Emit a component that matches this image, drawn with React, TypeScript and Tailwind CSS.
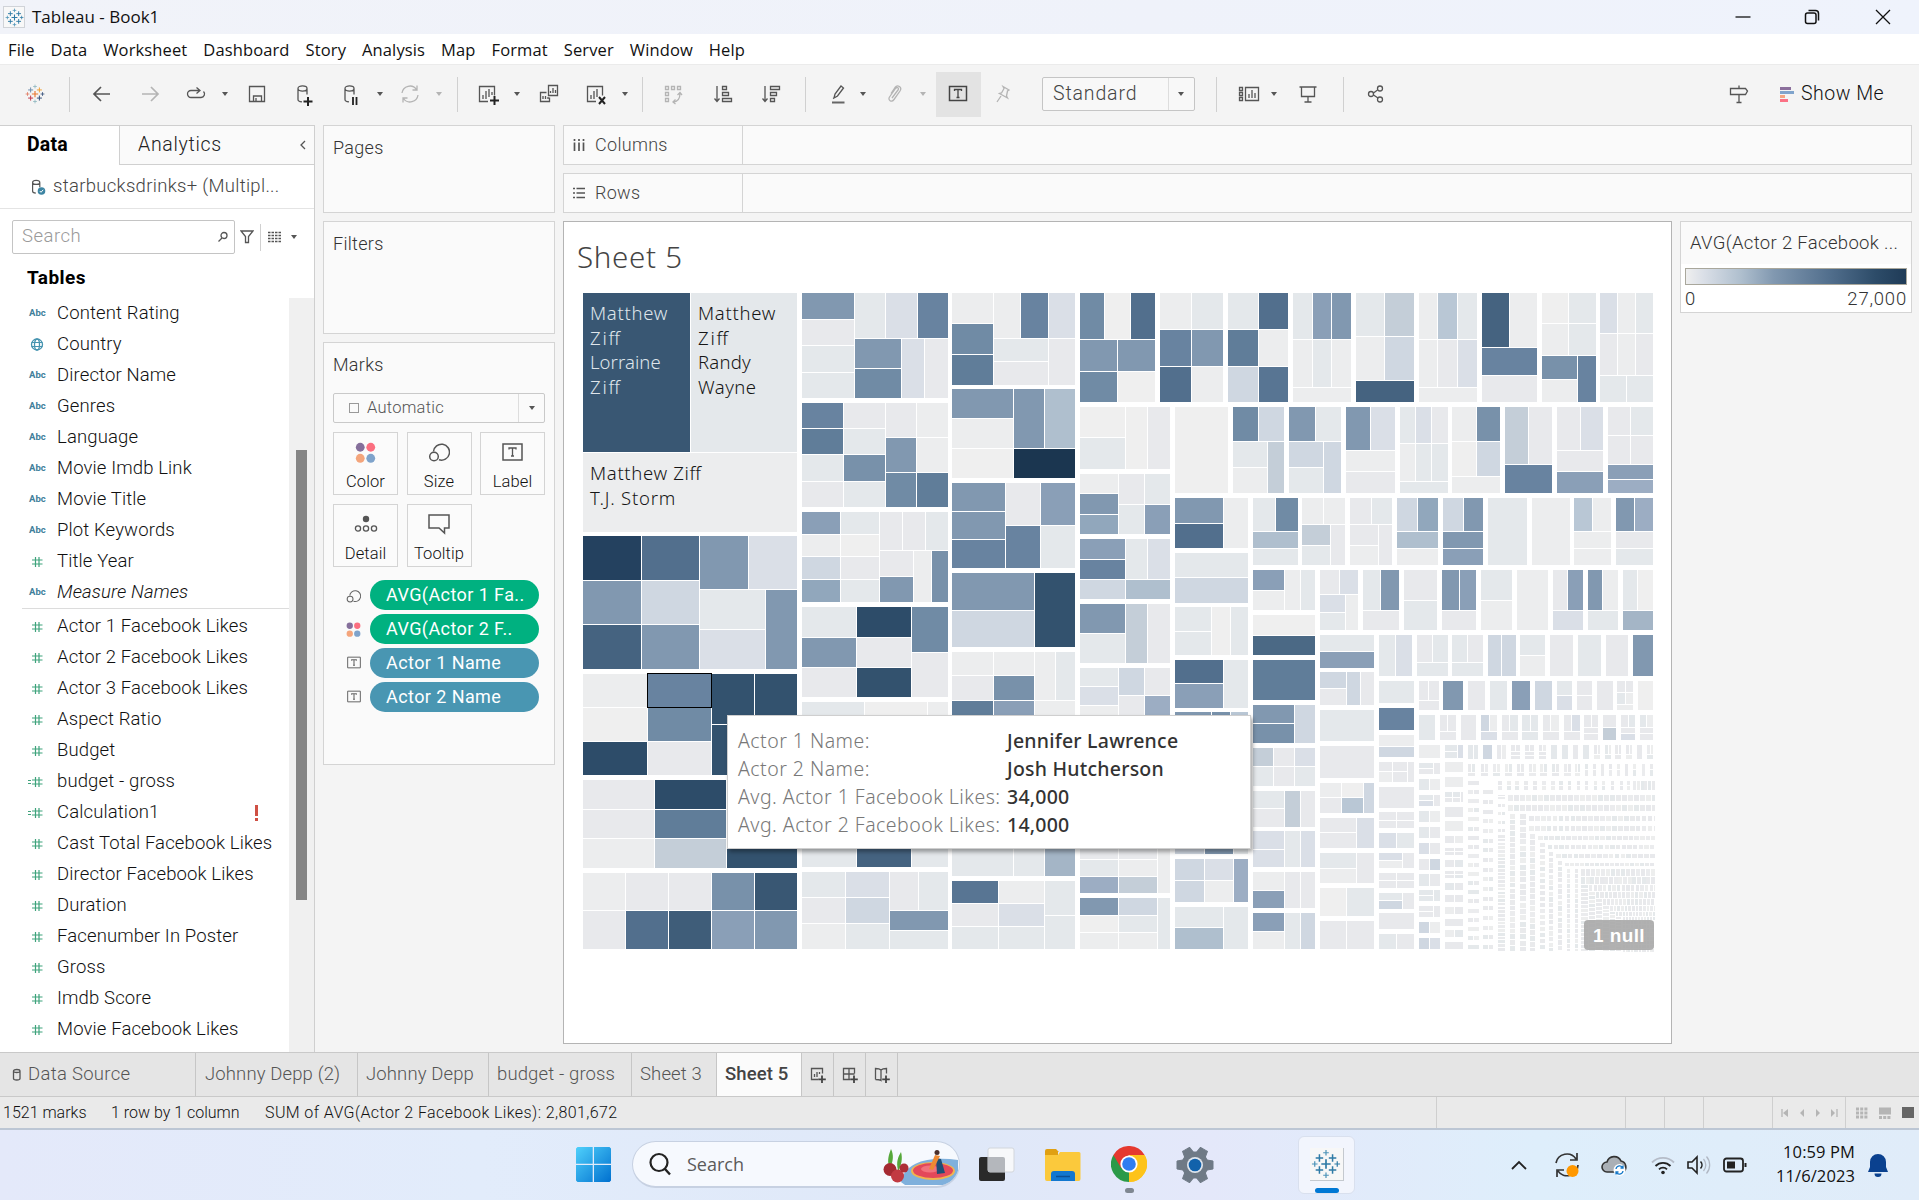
import React from "react";

const PALETTE: Record<string, string> = {
  a: "#efefef", b: "#ecedee", c: "#e8e9ec", d: "#e4e8eb", e: "#dadfe7", f: "#cfd7e1", g: "#c4ced8",
  h: "#b9c7d5", i: "#afbfce", j: "#a4b5c6", k: "#9cadc3", L: "#91a7bc", l: "#8a9fb7", m: "#8198b0",
  n: "#7891aa", o: "#708ba5", p: "#6883a0", q: "#607d99", r: "#587593", s: "#526f8d", t: "#4b6985",
  u: "#456380", v: "#3f5d79", w: "#395773", x: "#33526e", y: "#2d4c69", z: "#24415f", Z: "#1b3650",
};

type Cell = { x: number; y: number; w: number; h: number; c: string };

/* Each line is a strip of cells: "r y0 y1 x0 colour x1 colour x2 ..." for a row,
   "c x0 x1 y0 colour y1 ..." for a column. Units are thirds of a pixel. */
function parseStrips(spec: string, ox: number, oy: number): Cell[] {
  const out: Cell[] = [];
  for (const line of spec.trim().split("\n")) {
    const t = line.trim().split(/\s+/);
    const a = +t[1];
    const b = +t[2];
    for (let k = 3; k + 2 < t.length; k += 2) {
      const s = +t[k];
      const e = +t[k + 2];
      const c = PALETTE[t[k + 1]];
      if (t[0] === "r") out.push({ x: ox + s, y: oy + a, w: e - s - 3, h: b - a - 3, c });
      else out.push({ x: ox + a, y: oy + s, w: b - a - 3, h: e - s - 3, c });
    }
  }
  return out;
}

const TOP_LEFT = `
r 24 504 24 w 348 d 669
r 504 744 24 b 669
c 24 201 753 z 888 m 1020 u 1155
c 201 375 753 s 888 f 1020 m 1155
r 753 915 375 m 522 e 669
c 375 573 915 d 1035 e 1155
c 573 669 915 m 1155
c 681 840 24 m 105 c 183 d 264 d 342
r 24 162 840 d 933 e 1029 p 1122
c 840 981 162 m 252 o 342
c 981 1050 162 e 342
c 1050 1122 162 c 342
c 681 807 354 p 432 q 510 d 591 c 669
c 807 933 354 c 432 d 510 n 591 d 669
c 933 1026 354 c 459 m 564 o 669
c 1026 1122 354 b 459 b 564 q 669
c 681 798 681 l 750 b 816 f 885 L 954
c 798 915 681 d 750 a 816 c 885 d 954
r 681 798 915 c 984 c 1053 d 1122
c 915 1017 798 c 876 m 954
c 1017 1071 798 b 954
c 1071 1122 798 n 954
c 681 846 966 d 1059 m 1149 c 1239
c 846 1011 966 y 1059 c 1149 x 1239
c 1011 1122 966 o 1104 c 1239`;

const TOP_MID = `
c 21 147 24 b 117 o 210 q 303
r 24 162 147 b 228 p 312 e 393
c 147 312 162 d 231 c 303
c 312 393 162 c 303
c 21 207 312 m 402 b 492 a 582
r 312 492 207 m 300 i 393
r 492 582 207 Z 393
c 21 183 594 m 681 m 765 p 852
c 183 288 594 c 723 p 852
c 288 393 594 l 723 d 852
c 21 270 864 m 978 f 1089
c 270 393 864 x 1089
r 24 165 405 o 480 a 558 s 633
c 405 519 165 m 261 o 354
c 519 633 165 m 261 a 354
c 405 543 366 a 459 d 555
r 366 555 543 a 609 c 678
c 405 522 567 b 627 m 690 L 750
c 522 600 567 c 660 d 750
c 600 678 567 d 660 l 750
c 405 543 762 l 825 p 885 f 945
r 762 885 543 d 609 e 678
r 885 945 543 i 678
c 405 543 957 m 1047 d 1137
r 957 1137 543 g 609 c 678
c 645 741 24 b 135 p 246 s 354
c 741 837 24 d 135 m 246 b 354
c 849 942 24 d 135 q 246 f 354
c 942 1032 24 s 135 b 246 r 354
r 366 627 690 a 852
r 366 471 864 o 942 f 1020
c 864 969 471 d 549 b 627
c 969 1020 471 g 627
c 690 837 639 m 717 s 792
c 837 912 639 b 792
c 690 912 804 d 879 f 957
c 690 801 966 d 1041 d 1113
r 966 1113 801 a 858 d 912
r 639 741 924 d 993 o 1062
c 924 1062 741 i 792 d 843
c 924 1020 855 l 918 b 978
r 855 978 1020 b 1068 d 1113
c 924 1113 990 a 1053 t 1113`;

const TOP_RIGHT = `
r 24 165 -6 d 54 l 111 m 171
r 165 309 -6 b 54 d 111 b 171
r 309 354 -6 b 171
r 24 156 183 d 270 g 360
r 156 288 183 b 270 f 360
r 288 354 183 u 360
r 24 165 372 b 429 h 489 d 549
r 165 309 372 b 429 c 489 e 549
r 309 354 372 b 549
r 24 189 561 u 645 b 729
c 561 729 189 p 273 c 354
r 24 117 741 a 822 d 906
r 117 213 741 b 822 d 906
c 741 849 213 n 285 b 354
c 849 906 213 p 354
r 24 147 915 e 969 b 1023 d 1077
r 147 273 915 c 969 b 1023 c 1077
r 273 354 915 d 996 d 1077
r 366 471 -18 m 63 d 141
c -18 87 471 f 549 d 627
c 87 141 471 f 627
r 366 498 153 m 228 e 303
c 153 303 498 b 561 c 627
r 366 477 315 d 363 e 411 c 462
r 477 591 315 b 363 d 411 d 462
r 591 627 315 d 462
r 366 471 471 b 546 n 618
r 471 576 471 a 546 f 618
r 576 627 471 b 618
r 366 540 630 g 702 c 774
r 540 627 630 p 774
r 366 498 786 c 858 e 927
c 786 927 498 c 561 l 627
r 366 453 939 c 1008 d 1077
r 453 540 939 c 1008 c 1077
c 939 1077 540 l 585 k 627
r 639 720 21 b 87 b 153
c 21 108 720 g 783 d 843
c 108 153 720 c 843
r 639 720 165 c 231 d 294
c 165 252 720 c 783 b 843
c 252 294 720 c 843
r 639 741 306 f 369 L 432
c 306 432 741 i 792 b 843
r 639 741 444 f 507 m 567
c 444 567 741 m 792 l 843
r 639 843 579 d 699
r 639 843 711 b 828
r 639 741 837 h 894 b 951
c 837 951 741 b 792 b 843
r 639 741 963 m 1020 k 1077
c 963 1077 741 c 792 d 843
r 855 930 75 c 135 e 192
c 75 153 930 e 984 d 1038
c 153 192 930 b 1038
r 855 978 204 d 258 m 315
r 978 1038 204 c 315
c 327 429 855 c 948 d 1038
r 855 978 441 m 495 l 546
r 978 1038 441 c 546
c 558 654 855 d 948 b 1038
r 855 1038 666 b 762
r 855 978 774 c 819 l 867
r 978 1038 774 e 867
r 855 978 879 m 924 b 972
r 978 1038 879 d 972
r 855 978 984 d 1029 a 1077
r 978 1038 984 j 1077`;

const BOTTOM_LEFT = `
c 24 219 177 b 279 a 381 y 483
c 219 411 177 p 279 o 381 c 483
r 177 330 411 x 540 x 669
r 330 483 411 x 669
c 24 240 495 c 585 c 672 b 762
c 240 456 495 y 585 q 672 g 762
r 672 762 456 x 669
r 774 888 24 b 153 c 282 c 411 n 540 w 669
r 888 1005 24 c 153 s 282 v 411 l 540 m 669
r 261 340 681 d 870 a 1059 b 1122
r 672 759 681 d 846 u 1011 d 1122
c 681 813 771 d 849 c 927 b 1005
c 813 945 771 e 849 f 927 d 1005
r 771 888 945 c 1032 d 1122
c 945 1122 888 m 948 d 1005`;

const BOTTOM_MID = `
c 21 147 111 b 183 c 258 q 340
c 147 270 111 b 183 n 258 l 340
r 111 258 270 b 333 d 393
r 258 340 270 b 393
r 660 786 21 d 207 d 300 j 393
c 21 162 798 r 867 c 936 d 1005
c 162 300 798 b 867 e 936 d 1005
c 300 393 798 d 903 d 1005
c 405 522 159 d 216 e 273 b 340
c 522 600 159 f 243 c 340
c 600 678 159 c 243 k 340
c 405 522 660 c 735 d 786 k 837
c 522 639 660 c 735 b 786 g 837
c 639 678 660 b 837
c 405 522 849 m 903 a 954 b 1005
c 522 639 849 f 903 d 954 b 1005
c 639 678 849 d 1005
c 690 837 135 s 207 l 282
c 837 912 135 d 282
r 291 340 690 m 801 n 858 h 912
r 660 720 690 f 780 m 867 d 912
c 690 780 732 f 798 f 864
c 780 867 732 e 798 b 864
c 867 912 732 k 864
c 690 837 876 d 939 i 1005
c 837 912 876 d 1005
r 135 258 924 q 1113
c 924 1050 270 m 327 n 387
c 1050 1113 270 f 387
c 924 987 399 g 456 d 516
c 987 1050 399 c 456 c 516
c 1050 1113 399 e 456 d 516
c 924 1020 528 d 582 c 639
r 528 639 1020 g 1068 c 1113
c 924 1020 648 e 705 e 759
r 648 759 1020 d 1068 e 1113
c 924 1020 771 b 828 l 882
r 771 882 1020 c 1068 c 1113
c 924 1020 894 l 951 b 1005
r 894 1005 1020 d 1068 f 1113`;

const BOTTOM_RIGHT = `
c 75 240 60 d 111 l 162
c 75 156 171 f 222 c 273
r 171 273 156 f 198 c 240
r 285 381 75 d 240
r 393 492 75 c 240
c 75 141 504 b 549 c 597
c 141 207 504 a 549 h 597
c 207 240 504 f 597
c 75 186 609 c 654 c 702
c 186 240 609 e 702
c 75 186 714 d 762 b 807
c 186 240 714 c 807
r 819 906 75 a 156 d 240
r 918 1005 75 c 156 c 240
r 60 186 252 d 303 e 354
r 60 144 366 c 414 d 462
r 144 186 366 d 462
r 60 144 471 d 519 c 567
r 144 186 471 d 567
r 60 186 579 f 621 f 666
c 675 753 60 d 123 b 186
r 60 186 765 c 837
r 60 186 849 d 921
r 60 186 933 c 1002
r 60 186 1014 m 1077
r 198 267 252 d 360
r 279 348 252 p 360
c 252 360 360 b 396 f 429
r 441 471 252 c 294 c 339
r 471 504 252 b 294 c 339
r 441 504 339 c 360
r 516 582 252 c 360
r 591 618 252 c 306 c 360
r 618 642 252 c 306 c 360
r 654 702 252 e 306 d 360
c 252 324 714 e 738 b 762
r 714 762 324 c 360
r 774 798 252 c 306 c 360
r 798 822 252 c 306 c 360
c 252 324 834 d 858 f 885
r 834 885 324 c 360
r 894 945 252 c 360
r 957 1005 252 d 306 c 360
r 198 258 372 c 402 c 435
r 258 288 372 c 435
r 198 288 444 m 507
r 198 288 519 c 573
r 198 288 585 d 639
r 198 288 651 l 708
r 198 288 720 f 774
c 786 834 198 d 243 e 288
c 846 894 198 c 243 c 288
r 198 288 906 c 957
r 198 234 966 c 993 c 1017
r 234 270 966 d 993 b 1017
r 270 288 966 b 1017
r 198 288 1029 a 1077
r 300 378 372 d 423
r 300 351 435 c 459 c 486
r 351 378 435 c 486
r 300 378 498 c 546
r 300 351 558 f 585 b 609
r 351 378 558 e 609
r 300 351 621 c 645 d 672
r 351 378 621 c 672
r 300 351 681 d 708 d 732
r 351 378 681 d 732
r 300 351 744 c 768 b 795
r 351 378 744 c 795
r 300 351 807 c 831 e 858
r 351 378 807 c 858
r 300 339 867 c 891 c 912
c 867 912 339 c 357 c 378
c 924 966 300 c 339 g 378
r 300 339 978 c 1002 d 1023
c 978 1023 339 c 357 e 378
r 300 339 1035 d 1056 b 1077
c 1035 1077 339 c 357 c 378
r 390 432 372 b 438
c 372 417 444 d 461 c 480
r 444 480 417 c 438
r 492 528 372 d 405 b 438
c 372 417 540 d 558 e 576
r 540 576 417 c 438
r 588 624 372 d 405 b 438
r 636 672 372 d 405 c 438
r 684 720 372 e 405 c 438
r 732 768 372 c 405 f 438
r 777 816 372 d 405 c 438
c 372 417 825 d 843 d 861
r 825 861 417 d 438
c 372 417 873 c 891 c 909
r 873 909 417 c 438
r 921 957 372 f 405 b 438
r 969 1005 372 f 405 e 438
c 450 489 390 d 411 d 432
r 390 432 489 e 507
r 441 474 450 b 507
r 486 519 450 b 507
c 450 474 531 d 549 c 564
c 474 498 531 d 549 c 564
c 498 507 531 c 564
r 576 609 450 c 507
r 618 651 450 b 507
r 663 687 450 c 480 b 507
r 699 711 450 c 480 c 507
r 711 723 450 c 480 c 507
r 735 759 450 c 480 d 507
r 768 780 450 c 480 c 507
r 780 792 450 c 480 d 507
r 804 828 450 d 480 c 507
r 840 864 450 c 480 c 507
r 876 900 450 b 480 c 507
r 912 936 450 c 507
r 945 969 450 b 480 d 507
r 981 1005 450 c 507
r 390 435 519 d 537 d 552
r 390 435 564 f 594
r 390 435 606 c 621 b 636
r 390 411 648 c 663 c 678
c 648 678 411 c 423 c 435
r 390 411 690 c 705 c 720
c 690 720 411 c 423 c 435
r 390 411 732 c 744 b 756
c 732 756 411 c 423 c 435
r 390 435 768 d 789
r 390 435 801 d 822
r 390 435 834 c 852
r 390 435 864 d 885
r 390 435 1026 c 1044`;

function buildTail(): Cell[] {
  const out: Cell[] = [];
  const tone = ["#e8e9ec", "#e5e9eb", "#ebecee", "#e9eaec", "#edeeee"];
  let n = 0;
  const add = (x: number, y: number, w: number, h: number) => {
    out.push({ x: 2160 + x, y: 990 + y, w, h, c: tone[(n * 7 + (n >> 2)) % 5] });
    n++;
  };
  const row = (x: number, y: number, w: number, h: number, pitch: number) => {
    for (let p = x; p < 1080; p += pitch) add(p, y, Math.min(w, 1080 - p), h);
  };
  const col = (x: number, y: number, w: number, h: number, pitch: number, end = 1008) => {
    for (let p = y; p < end; p += pitch) add(x, p, w, Math.min(h, end - p));
  };
  const trio = (x: number, y: number, w: number, top: number, total: number) => {
    const half = (w - 3) / 2;
    add(x, y, half, top);
    add(x + half + 3, y, half, top);
    add(x, y + top + 3, w, total - top - 3);
  };
  [897, 930, 960, 993, 1056].forEach((x) => trio(x, 390, 18, 27, 42));
  [519, 558, 594, 630, 666, 702, 735, 771, 807].forEach((x) => trio(x, 447, 21, 24, 36));
  trio(840, 447, 15, 24, 36);
  [870, 894, 942, 966, 1014, 1065].forEach((x) => {
    add(x, 447, 9, 15);
    add(x, 465, 9, 18);
  });
  [918, 990, 1041].forEach((x) => add(x, 447, 9, 36));
  [609, 636, 660, 687, 714, 741, 768, 792, 819, 846, 870, 897, 921, 948, 975, 996].forEach((x, i) => {
    const w = i < 8 ? 12 : 9;
    add(x, 498, w, 12);
    add(x, 513, w, 12);
  });
  [1014, 1026, 1038, 1047, 1059, 1071].forEach((x) => add(x, 498, 8, 27));
  for (let i = 0; i < 19; i++) {
    const y = 498 + i * 27.33;
    if (i % 2 === 0) add(519, y, 33, 12);
    else {
      add(519, y, 15, 12);
      add(537, y, 15, 12);
    }
  }
  for (let i = 0; i < 17; i++) {
    const y = 526 + i * 29;
    if (i === 0 || i === 2) add(564, y, 30, 12);
    else {
      add(564, y, 15, 12);
      add(582, y, 12, 12);
    }
  }
  add(609, 540, 21, 3);
  add(609, 546, 21, 6);
  [567, 591, 618, 642].forEach((y) => {
    add(609, y, 9, 10);
    add(621, y, 9, 10);
  });
  col(609, 660, 21, 8, 11.3);
  row(639, 540, 15, 18, 18);
  row(639, 570, 15, 18, 18);
  row(702, 603, 14, 15, 17.8);
  row(702, 633, 14, 15, 17.8);
  row(729, 663, 14, 12, 17);
  row(759, 690, 13, 12, 17);
  row(783, 717, 14, 12, 17.6);
  row(810, 744, 12, 9, 15);
  row(858, 762, 12, 21, 15);
  row(858, 786, 12, 21, 14);
  row(882, 810, 10, 18, 14);
  row(903, 831, 10, 18, 13);
  row(924, 852, 9, 18, 12);
  row(945, 873, 8, 15, 11);
  row(963, 891, 7, 12, 10);
  row(984, 906, 6, 10, 9);
  for (let y = 918; y < 1005; y += 12) row(984, y, 6, 9, 8);
  col(645, 597, 15, 14, 17.2);
  col(675, 597, 18, 15, 19);
  col(705, 657, 15, 14, 18);
  col(735, 684, 15, 13, 18);
  col(762, 711, 12, 13, 17);
  col(789, 738, 12, 13, 17);
  col(816, 762, 9, 12, 15);
  col(840, 762, 9, 12, 15);
  col(858, 810, 21, 9, 12);
  col(882, 831, 18, 9, 12);
  col(903, 852, 18, 9, 12);
  col(924, 873, 18, 8, 11);
  col(945, 891, 15, 7, 10);
  col(963, 906, 15, 7, 9);
  return out;
}

const CELLS: Cell[] = [
  ...parseStrips(TOP_LEFT, 0, 0),
  ...parseStrips(TOP_MID, 1110, 0),
  ...parseStrips(TOP_RIGHT, 2160, 0),
  ...parseStrips(BOTTOM_LEFT, 0, 990),
  ...parseStrips(BOTTOM_MID, 1110, 990),
  ...parseStrips(BOTTOM_RIGHT, 2160, 990),
  ...buildTail(),
];

function Treemap() {
  return (
    <svg width="1088" height="680" viewBox="0 0 3264 2040" className="block" fontFamily='"Noto Sans","Open Sans",sans-serif' fontWeight="300" fontSize="55.5">
      <g shapeRendering="crispEdges">
        {CELLS.map((c, i) => (
          <rect key={i} x={c.x} y={c.y} width={c.w} height={c.h} fill={c.c} />
        ))}
        <rect x="217.5" y="1165.5" width="192" height="102" fill="none" stroke="#000" strokeWidth="3" />
      </g>
      <g fill="#dfe5eb">
        <text x="45" y="104" textLength="232">Matthew</text>
        <text x="45" y="179" textLength="90">Ziff</text>
        <text x="45" y="253" textLength="212">Lorraine</text>
        <text x="45" y="327" textLength="90">Ziff</text>
      </g>
      <g fill="#161616">
        <text x="369" y="104" textLength="232">Matthew</text>
        <text x="369" y="179" textLength="90">Ziff</text>
        <text x="369" y="253" textLength="158">Randy</text>
        <text x="369" y="327" textLength="174">Wayne</text>
        <text x="45" y="585" textLength="333">Matthew Ziff</text>
        <text x="45" y="660" textLength="256">T.J. Storm</text>
      </g>
    </svg>
  );
}

type IconProps = { children: React.ReactNode; w?: number; h?: number; color?: string; className?: string };
function Svg({ children, w = 24, h = 24, color = "#555", className = "" }: IconProps) {
  return (
    <svg width={w} height={h} viewBox={`0 0 ${w} ${h}`} fill="none" stroke={color} strokeWidth="1.3" className={`block shrink-0 ${className}`}>
      {children}
    </svg>
  );
}

function Caret({ className = "", color = "#555" }: { className?: string; color?: string }) {
  return (
    <Svg w={10} h={6} className={className}>
      <path d="M2 1h6L5 5z" fill={color} stroke="none" />
    </Svg>
  );
}

function Sep({ className }: { className: string }) {
  return <div className={`h-[35px] w-px shrink-0 bg-[#d0d0d0] ${className}`} />;
}

function TableauMark({ size, colors }: { size: number; colors: string[] }) {
  const plus = (x: number, y: number, r: number, c: string, sw: number) => (
    <path d={`M${x - r} ${y}h${2 * r}M${x} ${y - r}v${2 * r}`} stroke={c} strokeWidth={sw} />
  );
  return (
    <svg width={size} height={size} viewBox="0 0 32 32" className="block shrink-0">
      {plus(16, 16, 5, colors[0], 1.8)}
      {plus(9, 9.5, 4, colors[1], 1.6)}
      {plus(23, 9.5, 4, colors[2], 1.6)}
      {plus(9, 22.5, 4, colors[3], 1.6)}
      {plus(23, 22.5, 4, colors[4], 1.6)}
      {plus(16, 4, 3, colors[5], 1.3)}
      {plus(16, 28, 3, colors[5], 1.3)}
      {plus(4, 16, 3, colors[6], 1.3)}
      {plus(28, 16, 3, colors[4], 1.3)}
    </svg>
  );
}
const BLUES = ["#2f7ba6", "#2f7ba6", "#2f7ba6", "#2f7ba6", "#2f7ba6", "#4d93b8", "#4d93b8"];

const CYL = "M2 5.5c0-3.4 9-3.4 9 0s-9 3.4-9 0v11c0 1.4 2 2.2 4 2.4M11 5.5v6";

function Toolbar() {
  const dim = "#b4b4b4";
  return (
    <div className="flex h-[61px] items-center border-t border-[#ebebeb] bg-[#f4f4f4] pb-[2px]">
      <div className="mr-px ml-[25px]"><TableauMark size={20} colors={["#e8762d", "#6f8fb0", "#f0a33b", "#c23b4b", "#35507a", "#8fb7c0", "#e07a60"]} /></div>
      <Sep className="ml-[23px]" />
      <Svg className="ml-[20px]"><path d="M4 12h16M11 5l-7 7 7 7" strokeWidth="1.7" /></Svg>
      <Svg className="ml-[24px]" color={dim}><path d="M4 12h16M13 5l7 7-7 7" strokeWidth="1.7" /></Svg>
      <Svg className="ml-[22px]"><path d="M15.500 8.500H7a3.500 3.500 0 0 0 0 7h10a3.500 3.500 0 0 0 2.500-6M12.500 5.500l3.500 3-3.500 3" /></Svg>
      <Caret className="ml-[12px]" />
      <Svg className="ml-[15px]"><path d="M4.500 4.500h15v15h-15zM8.500 19v-5h8v5M11 16v3" /></Svg>
      <Svg className="ml-[23px]"><g transform="translate(4 1)"><path d={CYL} /><path d="M12 14v9M7.500 18.500h9" stroke="#222" strokeWidth="2" /></g></Svg>
      <Svg className="ml-[23px]"><g transform="translate(4 1)"><path d={CYL} /><path d="M10 14v8M13.500 14v8" stroke="#222" strokeWidth="1.8" /></g></Svg>
      <Caret className="ml-[12px]" />
      <Svg className="ml-[13px]" color={dim}><path d="M4 11a8 8 0 0 1 14.500-3.500M20 13a8 8 0 0 1-14.500 3.500M19 3.500v4.500h-4.500M5 20.500V16h4.500" /></Svg>
      <Caret className="ml-[12px]" color={dim} />
      <Sep className="ml-[13px]" />
      <Svg className="ml-[17px]"><path d="M13 19.500H4.500v-15h15v9M8 17v-4M11 17V9M14 15V7M17 13v-3" /><path d="M19.500 14v9M15 18.500h9" stroke="#222" strokeWidth="2" /></Svg>
      <Caret className="ml-[13px]" />
      <Svg className="ml-[15px]"><path d="M11.500 3.500h9v10h-9zM13.500 11V9M16 11V6M18.500 11V8M9.500 10.500h-6v9h9v-4M6 17v-3M8.500 17v-3M11 17v-2" /></Svg>
      <Svg className="ml-[22px]"><path d="M13 19.500H4.500v-15h15v9M8 17v-4M11 17V9M14 15V7" /><path d="M16 15l6 7M22 15l-6 7" stroke="#222" strokeWidth="2" /></Svg>
      <Caret className="ml-[13px]" />
      <Sep className="ml-[12px]" />
      <Svg className="ml-[18px]" color={dim}><path d="M4.500 4.500h3v3h-3zM10.500 4.500h3v3h-3zM16.500 4.500h3v3h-3zM4.500 10.500h3v3h-3zM4.500 16.500h3v3h-3zM12 20c5 0 7-3 7-9M16.500 13l2.500-2.500 2 2.500M14.500 17.500L12 20l2.500 2" /></Svg>
      <Svg className="ml-[26px]"><path d="M6 4v15M3.500 16.500L6 19.500l2.500-3" /><path d="M11.500 4.500h4v3h-4zM11.500 10.500h6v3h-6zM11.500 16.500h9v3h-9z" /></Svg>
      <Svg className="ml-[24px]"><path d="M6 4v15M3.500 16.500L6 19.500l2.500-3" /><path d="M11.500 4.500h9v3h-9zM11.500 10.500h6v3h-6zM11.500 16.500h4v3h-4z" /></Svg>
      <Sep className="ml-[22px]" />
      <Svg className="ml-[20px]"><path d="M8 16l1-4 6-8 2.500 2-6 8z M7 16.500l2-1" /><path d="M6 20.500h12.500" stroke="#666" strokeWidth="2" /></Svg>
      <Caret className="ml-[8px]" />
      <Svg className="ml-[15px]" color={dim}><path d="M9 16l6-8c1.500-2-1-3.500-2.500-1.500l-6 8.500c-2 3 2 6 4.500 2.500l6-8.500c2.500-4-2.500-7-5-3.500l-4 6" /></Svg>
      <Caret className="ml-[11px]" color={dim} />
      <div className="ml-[8px] flex h-[45px] w-[45px] shrink-0 items-center justify-center bg-[#e3e3e3] pr-[2px]">
        <Svg color="#444"><path d="M3.500 4.500h17v14h-17z" strokeWidth="1.500" /><path d="M8.500 9V7.500h7V9M12 7.500v8M10.500 15.500h3" /></Svg>
      </div>
      <Svg className="ml-[9px]" color={dim}><path d="M13 4.500l6 3.500-1.500 1-1 5 1 2-8-4.500 2-.5 2.500-4.500zM11 14l-4 6" /></Svg>
      <div className="ml-[28px] flex h-[34px] w-[153px] shrink-0 items-center rounded-[2px] border border-[#c5c5c5] bg-[#f8f8f8]">
        <div className="w-[126px] border-r border-[#ddd] pl-[10px] text-[19.500px] leading-[32px] tracking-[0.850px] text-[#444]">Standard</div>
        <Caret className="ml-[7px]" />
      </div>
      <Sep className="ml-[21px]" />
      <Svg className="ml-[20px]"><path d="M2.500 5.500h3v3h-3zM2.500 10.500h3v3h-3zM2.500 15.500h3v3h-3zM8.500 5.500h13v13h-13zM12 16v-4M15 16V8M18 16v-5" /></Svg>
      <Caret className="ml-[8px]" />
      <Svg className="ml-[17px]"><path d="M3.500 5h17M5.500 5v9.500h13V5M12 14.500v5.500M8.500 20h7" /></Svg>
      <Sep className="ml-[23px]" />
      <Svg className="ml-[20px]"><circle cx="7" cy="12" r="2.500" /><circle cx="16" cy="6.500" r="2.500" /><circle cx="16" cy="17.500" r="2.500" /><path d="M9.500 11l4-3M9.500 13l4.500 3" /></Svg>
      <Svg className="ml-[339px]"><path d="M3.500 6.500h15l2 2.500-2 3.500h-15zM12 3.500v3M12 12.500v8M9.500 20.500h5" /></Svg>
      <div className="ml-[29px] flex w-[14px] shrink-0 flex-col gap-px">
        <i className="h-[3px] w-[11px] bg-[#8b6f9c]" />
        <i className="h-[3px] w-[14px] bg-[#80a4cc]" />
        <i className="h-[3px] w-[5px] bg-[#f4a582]" />
        <i className="h-[3px] w-[8px] bg-[#fb7185]" />
      </div>
      <div className="ml-[7px] text-[19.500px] tracking-[0.5px] whitespace-nowrap text-[#111]">Show Me</div>
    </div>
  );
}

type Field = { name: string; kind: "abc" | "globe" | "num" | "calc"; italic?: boolean; warn?: boolean };
const DIMENSIONS: Field[] = [
  { name: "Content Rating", kind: "abc" },
  { name: "Country", kind: "globe" },
  { name: "Director Name", kind: "abc" },
  { name: "Genres", kind: "abc" },
  { name: "Language", kind: "abc" },
  { name: "Movie Imdb Link", kind: "abc" },
  { name: "Movie Title", kind: "abc" },
  { name: "Plot Keywords", kind: "abc" },
  { name: "Title Year", kind: "num" },
  { name: "Measure Names", kind: "abc", italic: true },
];
const MEASURES: Field[] = [
  { name: "Actor 1 Facebook Likes", kind: "num" },
  { name: "Actor 2 Facebook Likes", kind: "num" },
  { name: "Actor 3 Facebook Likes", kind: "num" },
  { name: "Aspect Ratio", kind: "num" },
  { name: "Budget", kind: "num" },
  { name: "budget - gross", kind: "calc" },
  { name: "Calculation1", kind: "calc", warn: true },
  { name: "Cast Total Facebook Likes", kind: "num" },
  { name: "Director Facebook Likes", kind: "num" },
  { name: "Duration", kind: "num" },
  { name: "Facenumber In Poster", kind: "num" },
  { name: "Gross", kind: "num" },
  { name: "Imdb Score", kind: "num" },
  { name: "Movie Facebook Likes", kind: "num" },
];

function FieldIcon({ kind }: { kind: Field["kind"] }) {
  if (kind === "abc") return <span className="block pl-px text-[9.500px] font-bold text-[#3f7f9b]">Abc</span>;
  if (kind === "globe")
    return (
      <Svg w={16} h={16} color="#4694b0" className="ml-px"><circle cx="8" cy="7.500" r="5.500" /><ellipse cx="8" cy="7.500" rx="2.500" ry="5.500" /><path d="M2.500 5.500h11M2.500 9.500h11" strokeWidth="1" /></Svg>
    );
  return (
    <Svg w={16} h={14} color="#3fa37c">
      <path d="M7.500 2v10M11 2v10M4 5h10.500M4 9h10.500" strokeWidth="1.200" />
      {kind === "calc" && <path d="M0 5.500h3M0 8.500h3" strokeWidth="1.200" />}
    </Svg>
  );
}

function FieldRow({ f }: { f: Field }) {
  return (
    <div className="flex h-[31px] items-center pl-[28px]">
      <div className="w-[29px] shrink-0"><FieldIcon kind={f.kind} /></div>
      <div className={`w-[190px] text-[18.500px] tracking-[0.130px] whitespace-nowrap text-[#111] ${f.italic ? "tracking-[0.4px] italic" : ""}`}>{f.name}</div>
      {f.warn && (
        <div className="ml-[8px] flex flex-col gap-[2px]">
          <i className="h-[11px] w-[3px] bg-[#cf5044]" />
          <i className="h-[3px] w-[3px] bg-[#cf5044]" />
        </div>
      )}
    </div>
  );
}

function DataPane() {
  return (
    <div className="flex h-full w-[315px] shrink-0 flex-col border-t border-r border-[#cfcfcf] bg-white">
      <div className="flex h-[39px] shrink-0 items-stretch">
        <div className="w-[119px] pl-[27px] text-[19.500px] leading-[38px] font-bold tracking-[0.2px] text-black">Data</div>
        <div className="flex flex-1 items-center justify-between border-b border-l border-[#d0d0d0] bg-[#fafafa] pr-[7px] pl-[18px] text-[19.500px] text-[#222]">
          <span className="tracking-[0.7px]">Analytics</span>
          <Svg w={8} h={12}><path d="M6 2L2 6l4 4" /></Svg>
        </div>
      </div>
      <div className="flex h-[44px] shrink-0 items-center border-b border-[#e4e4e4] pl-[30px]">
        <Svg w={17} h={20}><g transform="translate(1 1) scale(.8)"><path d={CYL} strokeWidth="1.500" /></g><circle cx="11.500" cy="14" r="3.800" fill="#3d85a3" stroke="none" /><path d="M9.800 14l1.200 1.300 2.200-2.500" stroke="#fff" strokeWidth="1" /></Svg>
        <span className="ml-[6px] text-[18.500px] tracking-[0.3px] whitespace-nowrap text-[#444]">starbucksdrinks+ (Multipl...</span>
      </div>
      <div className="flex h-[56px] shrink-0 items-center pl-[12px]">
        <div className="flex h-[34px] w-[223px] items-center justify-between rounded-[2px] border border-[#c4c4c4] px-[9px] text-[18.500px] text-[#9a9a9a]">
          <span className="tracking-[0.5px]">Search</span>
          <Svg w={12} h={12} className="-mr-[4px]"><circle cx="7" cy="4.500" r="3" /><path d="M5 7L1.500 10.500" /></Svg>
        </div>
        <Svg w={14} h={14} className="ml-[5px]"><path d="M1 1h12L8.500 6.500v6h-3v-6z" /></Svg>
        <div className="ml-[6px] h-[27px] w-px bg-[#d0d0d0]" />
        <Svg w={13} h={12} className="ml-[7px]"><path d="M0 1.500h13M0 4.500h13M0 7.500h13M0 10.500h13" strokeWidth="1.500" strokeDasharray="2.500 1" /></Svg>
        <Caret className="ml-[8px]" />
      </div>
      <div className="h-[33px] shrink-0 pl-[27px] text-[19px] leading-[26px] font-bold tracking-[0.450px] text-black">Tables</div>
      <div className="flex min-h-0 flex-1">
        <div className="w-[289px] shrink-0 overflow-hidden">
          {DIMENSIONS.map((f) => <FieldRow key={f.name} f={f} />)}
          <div className="mb-[2px] ml-[22px] h-px bg-[#dcdcdc]" />
          {MEASURES.map((f) => <FieldRow key={f.name} f={f} />)}
        </div>
        <div className="flex-1 bg-[#f0f0f0] pt-[152px] pl-[7px]">
          <div className="h-[450px] w-[11px] bg-[#858585]" />
        </div>
      </div>
    </div>
  );
}

const LABEL_T = (
  <>
    <path d="M1 1h19v16H1z" strokeWidth="1.500" />
    <path d="M7 6.500V5h7v1.500M10.500 5v8M9 13h3" />
  </>
);
const SIZE_SHAPE = (
  <>
    <path d="M5.500 9.500a8 8 0 1 1 5.500 8.300" strokeWidth="1.500" />
    <circle cx="6" cy="14.500" r="4.300" strokeWidth="1.500" />
  </>
);
function ColorDots({ s }: { s: number }) {
  return (
    <svg width={s} height={s} viewBox="0 0 20 20" className="block">
      <circle cx="5" cy="5" r="4.200" fill="#856f9b" /><circle cx="15" cy="5" r="4.200" fill="#fb6f80" />
      <circle cx="5" cy="15.500" r="4.200" fill="#f4a57c" /><circle cx="15" cy="15.500" r="4.200" fill="#7fa3cb" />
    </svg>
  );
}

function MarkButton({ label, children }: { label: string; children: React.ReactNode }) {
  return (
    <div className="flex h-[63px] w-[65px] flex-col items-center border border-[#d4d4d4] bg-[#fbfbfb]">
      <div className="mt-[8px] flex h-[24px] items-center justify-center">{children}</div>
      <div className="mt-[7px] text-[16.500px] leading-[24px] tracking-[0.1px] text-[#111]">{label}</div>
    </div>
  );
}

function Pill({ text, color, icon }: { text: string; color: string; icon: React.ReactNode }) {
  return (
    <div className="flex h-[34px] items-start">
      <div className="mt-[8px] flex w-[15px] justify-center">{icon}</div>
      <div className={`ml-[9px] h-[30px] w-[169px] rounded-full pl-[16px] text-[18px] leading-[30px] font-normal tracking-[0.420px] whitespace-nowrap text-white ${color}`}>{text}</div>
    </div>
  );
}

function ShelfColumn() {
  const card = "border border-[#d4d4d4] bg-[#fafafa] pl-[9px] text-[18px] tracking-[0.3px] text-[#333]";
  const tIcon = <svg width="14" height="13" viewBox="0 0 21 18" fill="none" stroke="#666" strokeWidth="1.600">{LABEL_T}</svg>;
  return (
    <div className="ml-[8px] flex w-[232px] shrink-0 flex-col gap-[8px]">
      <div className={`h-[88px] pt-[8px] ${card}`}>Pages</div>
      <div className={`h-[113px] pt-[8px] ${card}`}>Filters</div>
      <div className={`h-[423px] pt-[8px] ${card}`}>
        <div className="h-[27px]">Marks</div>
        <div className="mt-[15px] flex h-[30px] w-[212px] items-center rounded-[2px] border border-[#c9c9c9] text-[16.500px] text-[#555]">
          <span className="ml-[15px] h-[10px] w-[10px] border border-[#999]" />
          <span className="ml-[8px] w-[152px] border-r border-[#ddd] leading-[28px] tracking-[0.250px]">Automatic</span>
          <Caret className="ml-[8px]" />
        </div>
        <div className="mt-[9px] grid w-[212px] grid-cols-[65px_65px_65px] justify-between gap-y-[9px]">
          <MarkButton label="Color"><ColorDots s={21} /></MarkButton>
          <MarkButton label="Size"><Svg w={22} h={20}>{SIZE_SHAPE}</Svg></MarkButton>
          <MarkButton label="Label"><Svg w={21} h={18}>{LABEL_T}</Svg></MarkButton>
          <MarkButton label="Detail">
            <Svg w={24} h={20}><circle cx="12" cy="5" r="3.200" fill="#555" stroke="none" /><circle cx="4" cy="14.500" r="2.600" /><circle cx="12" cy="14.500" r="2.600" /><circle cx="20" cy="14.500" r="2.600" /></Svg>
          </MarkButton>
          <MarkButton label="Tooltip"><Svg w={22} h={22}><path d="M1 2h20v13h-4.500v5l-5.500-5H1z" strokeWidth="1.500" /></Svg></MarkButton>
        </div>
        <div className="mt-[13px] pl-[13px]">
          <Pill text="AVG(Actor 1 Fa.." color="bg-[#00b180]" icon={<svg width="15" height="16" viewBox="0 0 22 20" fill="none" stroke="#666">{SIZE_SHAPE}</svg>} />
          <Pill text="AVG(Actor 2 F.." color="bg-[#00b180]" icon={<ColorDots s={15} />} />
          <Pill text="Actor 1 Name" color="bg-[#4996b2]" icon={tIcon} />
          <Pill text="Actor 2 Name" color="bg-[#4996b2]" icon={tIcon} />
        </div>
      </div>
    </div>
  );
}

function Shelf({ label, icon }: { label: string; icon: React.ReactNode }) {
  return (
    <div className="flex h-[40px] w-[1349px] border border-[#d4d4d4] bg-[#fafafa] text-[18px] text-[#444]">
      <div className="flex w-[179px] items-center border-r border-[#d4d4d4] pb-px pl-[8px]">
        {icon}
        <span className="ml-[9px] tracking-[0.3px]">{label}</span>
      </div>
    </div>
  );
}

function Tooltip() {
  const rows = [
    ["Actor 1 Name:", "Jennifer Lawrence"],
    ["Actor 2 Name:", "Josh Hutcherson"],
    ["Avg. Actor 1 Facebook Likes:", "34,000"],
    ["Avg. Actor 2 Facebook Likes:", "14,000"],
  ];
  return (
    <div className="absolute top-[493px] left-[163px] h-[134px] w-[524px] border border-[#cfcfcf] bg-white pt-[11px] pl-[10px] font-['Noto_Sans'] text-[19.500px] shadow-[2px_3px_4px_rgba(0,0,0,0.35)]">
      {rows.map(([k, v]) => (
        <div key={k} className="flex h-[28px] items-center whitespace-nowrap">
          <span className="w-[269px] font-light tracking-[0.470px] text-[#787878]">{k}</span>
          <span className="font-medium tracking-[0.230px] text-[#333]">{v}</span>
        </div>
      ))}
    </div>
  );
}

function Canvas() {
  return (
    <div className="relative h-[823px] w-[1109px] border border-[#b4b4b4] bg-white">
      <div className="h-[63px] pt-[17px] pl-[13px] font-['Noto_Sans'] text-[29.500px] leading-[36px] font-light tracking-[0.7px] text-[#444]">Sheet 5</div>
      <div className="pl-[11px]"><Treemap /></div>
      <Tooltip />
      <div className="absolute top-[698px] left-[1020px] flex h-[30px] w-[70px] items-center justify-center rounded-[4px] bg-[#a9a9a9]/90 pt-[2px] font-['Liberation_Sans'] text-[19px] font-bold tracking-[0.4px] text-white">1 null</div>
    </div>
  );
}

function Legend() {
  return (
    <div className="h-[92px] w-[232px] border border-[#d4d4d4] bg-white text-[18.500px] text-[#333]">
      <div className="h-[42px] bg-[#fafafa] pl-[9px] leading-[43px] tracking-[0.330px] whitespace-nowrap">AVG(Actor 2 Facebook ...</div>
      <div className="mt-[4px] ml-[4px] h-[17px] w-[222px] border border-[#a9a79c] bg-[linear-gradient(90deg,#efefef_0%,#dadfe7_8%,#afbfce_25%,#8198b0_40%,#526f8d_65%,#2d4c69_86%,#1f3b57_100%)]" />
      <div className="flex justify-between pr-[4px] pl-[4px] leading-[28px] tracking-[0.8px]"><span>0</span><span>27,000</span></div>
    </div>
  );
}

function SheetTabs() {
  const tab = "flex h-full shrink-0 items-center border-r border-[#c6c6c6] whitespace-nowrap";
  const add = (p: string) => (
    <Svg w={18} h={18}><path d={p} /><path d="M13 9.500v7.500M9.200 13.300h7.600" stroke="#444" strokeWidth="1.800" /></Svg>
  );
  return (
    <div className="flex h-[45px] shrink-0 border-t border-b border-[#c9c9c9] bg-[#e5e5e5] text-[18.500px] tracking-[0.130px] text-[#555]">
      <div className={`w-[196px] pl-[12px] ${tab}`}>
        <Svg w={10} h={14}><path d="M1.500 3c0-2 6.500-2 6.500 0s-6.500 2-6.500 0v7.500c0 2 6.500 2 6.500 0V3" /></Svg>
        <span className="ml-[6px] tracking-[0.3px]">Data Source</span>
      </div>
      <div className={`w-[162px] pl-[9px] ${tab}`}>Johnny Depp (2)</div>
      <div className={`w-[131px] pl-[8px] ${tab}`}>Johnny Depp</div>
      <div className={`w-[143px] pl-[8px] ${tab}`}>budget - gross</div>
      <div className={`w-[85px] pl-[8px] ${tab}`}>Sheet 3</div>
      <div className={`w-[85px] bg-[#fbfbfb] pl-[8px] font-medium text-[#444] ${tab}`}>Sheet 5</div>
      <div className={`w-[32px] justify-center ${tab}`}>{add("M9 13.500H2.500v-11h11v5M5.500 11V8M8 11V6M10.500 8V6")}</div>
      <div className={`w-[32px] justify-center ${tab}`}>{add("M9 13.500H2.500v-11h11v5M8 2.500v11M2.500 8h11")}</div>
      <div className={`w-[32px] justify-center ${tab}`}>{add("M2.500 13.500v-11c3 0 4.500.5 5.500 1.500 1-1 2.500-1.500 5.500-1.500v5M2.500 13.500c2.500 0 4 0 5.500 1V4")}</div>
    </div>
  );
}

function StatusBar() {
  const b = "h-full shrink-0 border-l border-[#cfcfcf]";
  return (
    <div className="flex h-[31px] shrink-0 items-center bg-[#eaeaea] text-[16px] whitespace-nowrap text-[#111]">
      <span className="w-[108px] pl-[3px]">1521 marks</span>
      <span className="ml-[3px] w-[154px]">1 row by 1 column</span>
      <span className="tracking-[0.4px]">SUM of AVG(Actor 2 Facebook Likes): 2,801,672</span>
      <div className={`ml-auto w-[189px] ${b}`} />
      <div className={`w-[39px] ${b}`} />
      <div className={`w-[39px] ${b}`} />
      <div className={`w-[69px] ${b}`} />
      <div className={`flex w-[73px] items-center pl-[7px] ${b}`}>
        <Svg w={62} h={10} color="#b5b5b5"><path d="M8 1v8L3 5zM24 1v8l-4-4zM36 1v8l4-4zM51 1v8l4-4z" fill="#b5b5b5" stroke="none" /><path d="M2 1v8M57 1v8" /></Svg>
      </div>
      <div className={`flex w-[74px] items-center gap-[11px] pl-[10px] ${b}`}>
        <Svg w={12} h={12} color="#b5b5b5"><path d="M0 2h12M0 6h12M0 10h12" strokeWidth="3" strokeDasharray="3 1.200" /></Svg>
        <Svg w={12} h={12} color="#b5b5b5"><path d="M0 4h12" strokeWidth="7" /><path d="M0 10.500h12" strokeWidth="3" strokeDasharray="3 1.200" /></Svg>
        <i className="h-[11px] w-[12px] bg-[#666]" />
      </div>
    </div>
  );
}

function Taskbar() {
  return (
    <div className="flex h-[72px] shrink-0 items-center border-t-2 border-[#bcc6d4] bg-[linear-gradient(90deg,#e4e9fa_0%,#e2ecfb_25%,#dfe8f8_50%,#e4e8fa_63%,#deeefb_80%,#e0ecf9_100%)] pb-px font-['Open_Sans'] font-normal">
      <svg width="35" height="35" viewBox="0 0 35 35" className="ml-[576px] block shrink-0">
        <defs><linearGradient id="win" x1="0" y1="0" x2="1" y2="1"><stop offset="0" stopColor="#4fd0fb" /><stop offset="1" stopColor="#0070cf" /></linearGradient></defs>
        <path d="M1.500 0H16.700V16.700H0V1.500zM18 0H33.500L35 1.500V16.700H18zM0 18H16.700V35H1.500L0 33.500zM18 18H35V33.500L33.500 35H18z" fill="url(#win)" />
      </svg>
      <div className="ml-[21px] flex h-[47px] w-[328px] shrink-0 items-center overflow-hidden rounded-full border border-b-2 border-[#c7d1e2] bg-[#f6f9fe] pl-[15px] text-[18px] text-[#5a5a5a]">
        <Svg w={24} h={24} color="#222"><circle cx="11" cy="10.500" r="8.500" strokeWidth="2.200" /><path d="M17 17l5 5.500" strokeWidth="2.400" /></Svg>
        <span className="ml-[15px]">Search</span>
        <svg width="76" height="40" viewBox="0 0 76 40" className="mt-[3px] ml-auto block">
          <path d="M18 36C22 14 50 10 75 14v20c0 3-4 5-8 5H22z" fill="#7fb0dc" />
          <ellipse cx="50" cy="25" rx="22" ry="9" fill="#f0b44f" />
          <ellipse cx="50" cy="24.500" rx="20" ry="7.500" fill="#e3485a" />
          <ellipse cx="47" cy="23" rx="9" ry="3.500" fill="#f2727c" />
          <path d="M53 12l5 1 4 14-8 1z" fill="#1f4e74" /><path d="M52 9l5 1-7 14-4-1z" fill="#ee8a33" /><circle cx="54" cy="6.500" r="2.500" fill="#4b2e2a" />
          <path d="M6 20c-2-6 0-12 2-17 3 6 2 12 0 17zM15 24c-2-8 0-13 3-18 2 7 0 13-2 18z" fill="#56a83a" />
          <circle cx="7" cy="23.500" r="6.500" fill="#a52a32" /><circle cx="14.500" cy="30" r="6.500" fill="#c13a42" /><circle cx="21" cy="22" r="4.500" fill="#ad2e37" />
        </svg>
      </div>
      <svg width="38" height="36" viewBox="0 0 38 36" className="ml-[18px] block shrink-0">
        <rect x="1" y="10" width="26" height="24" rx="2" fill="#2a2a2a" /><rect x="10" y="1" width="26" height="24" rx="2" fill="#f7f8fa" stroke="#d2d6dc" /><path d="M10 10h15a2 2 0 0 1 2 2v13H10z" fill="#b4b7bc" />
      </svg>
      <svg width="37" height="34" viewBox="0 0 37 34" className="ml-[28px] block shrink-0">
        <path d="M1 3q0-2 2-2h9l3 3h-1v5H1z" fill="#e0a012" /><path d="M1 7h13l2-3h19q1.500 0 1.500 1.500V31q0 2-2 2H3q-2 0-2-2z" fill="#fbc93c" /><path d="M7 33V26q0-3 3-3h18q3 0 3 3v7z" fill="#1277cf" /><path d="M12 28.500h14" stroke="#0b4f94" strokeWidth="1.500" />
      </svg>
      <div className="ml-[30px] flex h-full w-[36px] shrink-0 flex-col items-center pt-[16px]">
        <svg width="36" height="36" viewBox="0 0 36 36" className="block">
          <path d="M18 18L33.600 9A18 18 0 0 1 18 36z" fill="#fdc31a" />
          <path d="M18 18V36A18 18 0 0 1 2.400 9z" fill="#2b9a48" />
          <path d="M18 9h15.600A18 18 0 0 1 18 36l8-13.500z" fill="#fdc31a" />
          <path d="M18 9h15.600A18 18 0 0 0 2.400 9l8 13.500z" fill="#e5392f" />
          <circle cx="18" cy="18" r="8.600" fill="#fff" /><circle cx="18" cy="18" r="6.800" fill="#2f7df0" />
        </svg>
        <i className="mt-[6px] h-[5px] w-[9px] rounded-full bg-[#7f8791]" />
      </div>
      <svg width="38" height="38" viewBox="-19 -19 38 38" className="ml-[29px] block shrink-0">
        {[0, 60, 120, 180, 240, 300].map((a) => <path key={a} d="M-5-12L-4-18H4L5-12z" fill="#6f7a86" stroke="#6f7a86" strokeLinejoin="round" transform={`rotate(${a + 30})`} />)}
        <circle r="13.500" fill="#6f7a86" /><circle r="8" fill="#dfe5ec" /><circle r="6.300" fill="#1262ab" />
      </svg>
      <div className="ml-[84px] flex h-[58px] w-[57px] shrink-0 flex-col items-center rounded-[6px] border border-[#d9e0ee] bg-[#f2f5fd] pt-[11px]">
        <div className="flex h-[34px] w-[34px] items-center justify-center border-r border-b border-[#c4c9cf] bg-[#f7f7f7]"><TableauMark size={30} colors={BLUES} /></div>
        <i className="mt-[7px] h-[5px] w-[24px] shrink-0 rounded-full bg-[#0078d4]" />
      </div>
      <Svg w={18} h={12} color="#222" className="ml-[155px]"><path d="M2 10l7-7 7 7" strokeWidth="1.800" /></Svg>
      <Svg w={28} h={28} color="#333" className="ml-[25px]"><path d="M3 12a11 11 0 0 1 20-4M24 2v7h-7M4 26v-7h7M25 14a11 11 0 0 1-20 6" strokeWidth="1.700" /><circle cx="19.500" cy="20" r="6" fill="#ff9800" stroke="none" /></Svg>
      <Svg w={28} h={24} className="ml-[19px]" color="#333"><path d="M7 19a5 5 0 0 1 0-10 7.500 7.500 0 0 1 14-1 6 6 0 0 1 2 11z" fill="#aab0b6" strokeWidth="1.600" /><circle cx="19.500" cy="17" r="6" fill="#fff" stroke="none" /><path d="M16 16a3.700 3.700 0 0 1 7-1M23 18a3.700 3.700 0 0 1-7 1M23 12.500V15h-2.500M16 21.500V19h2.500" stroke="#1377c8" /></Svg>
      <Svg w={24} h={20} color="#222" className="ml-[23px]"><path d="M1 7.500a15.500 15.500 0 0 1 22 0" stroke="#b5bcc8" strokeWidth="1.800" /><path d="M4.500 11a10.500 10.500 0 0 1 15 0M8 14.300a5.600 5.600 0 0 1 8 0" strokeWidth="1.800" /><circle cx="12" cy="17.500" r="1.800" fill="#222" stroke="none" /></Svg>
      <Svg w={26} h={20} color="#222" className="ml-[11px]"><path d="M2 7h4l5-5v16l-5-5H2z" strokeWidth="1.600" /><path d="M14.500 6.500a5 5 0 0 1 0 7" strokeWidth="1.600" /><path d="M17.500 4a9 9 0 0 1 0 12M20.500 1.500a13 13 0 0 1 0 17" stroke="#b0b7c3" /></Svg>
      <Svg w={25} h={16} color="#222" className="ml-[11px]"><rect x="1" y="1.500" width="19" height="13" rx="2.500" strokeWidth="1.800" /><rect x="4" y="4.500" width="8" height="7" fill="#222" stroke="none" /><path d="M22.500 6v4" strokeWidth="2" /></Svg>
      <div className="mr-[12px] ml-auto pb-px text-right text-[16.500px] leading-[24px] tracking-[0.1px] text-[#111]">
        <div>10:59 PM</div>
        <div>11/6/2023</div>
      </div>
      <svg width="22" height="24" viewBox="0 0 22 24" className="mr-[30px] block shrink-0"><path d="M11 1a8 8 0 0 1 8 8v5l2 5H1l2-5V9a8 8 0 0 1 8-8zM7.500 20.500h7a3.500 3.500 0 0 1-7 0z" fill="#0a418f" /></svg>
    </div>
  );
}

const MENUS = ["File", "Data", "Worksheet", "Dashboard", "Story", "Analysis", "Map", "Format", "Server", "Window", "Help"];

export default function App() {
  return (
    <div className="flex h-[1200px] w-[1919px] flex-col overflow-hidden bg-[#f4f4f4] font-['Roboto'] font-light">
      <div className="flex h-[34px] shrink-0 items-center bg-[linear-gradient(90deg,#f1f3f9,#eff2fa_60%,#eff3fc)] pl-[3px] font-['Open_Sans'] font-normal">
        <div className="flex h-[22px] w-[22px] items-center justify-center border border-[#d0d3d8] bg-[#f8f8f8]"><TableauMark size={19} colors={BLUES} /></div>
        <span className="ml-[7px] text-[17px] text-[#111]">Tableau - Book1</span>
        <Svg w={16} h={16} color="#111" className="ml-auto"><path d="M0.500 8h15" /></Svg>
        <Svg w={16} h={16} color="#111" className="ml-[53px]"><rect x="1.500" y="4" width="10.500" height="10.500" rx="2" strokeWidth="1.500" /><path d="M4.500 1.500h7a3 3 0 0 1 3 3v7" strokeWidth="1.500" /></Svg>
        <Svg w={16} h={16} color="#111" className="mr-[28px] ml-[55px]"><path d="M1 1l14 14M15 1L1 15" /></Svg>
      </div>
      <div className="flex h-[30px] shrink-0 items-center gap-[16px] bg-white pt-[2px] pl-[8px] font-['Open_Sans'] text-[16.500px] font-normal tracking-[0.120px] text-[#111]">
        {MENUS.map((m) => <span key={m}>{m}</span>)}
      </div>
      <Toolbar />
      <div className="flex h-[927px] shrink-0">
        <DataPane />
        <ShelfColumn />
        <div className="ml-[8px] flex flex-col gap-[8px]">
          <Shelf label="Columns" icon={<Svg w={14} h={14}><path d="M2.500 1v2M7 1v2M11.500 1v2M2.500 4.500V13M7 4.500V13M11.500 4.500V13" strokeWidth="1.700" /></Svg>} />
          <Shelf label="Rows" icon={<Svg w={14} h={14}><path d="M1 2.500h2M1 7h2M1 11.500h2M4.500 2.500H13M4.500 7H13M4.500 11.500H13" strokeWidth="1.700" /></Svg>} />
          <div className="flex gap-[8px]">
            <Canvas />
            <Legend />
          </div>
        </div>
      </div>
      <SheetTabs />
      <StatusBar />
      <Taskbar />
    </div>
  );
}
